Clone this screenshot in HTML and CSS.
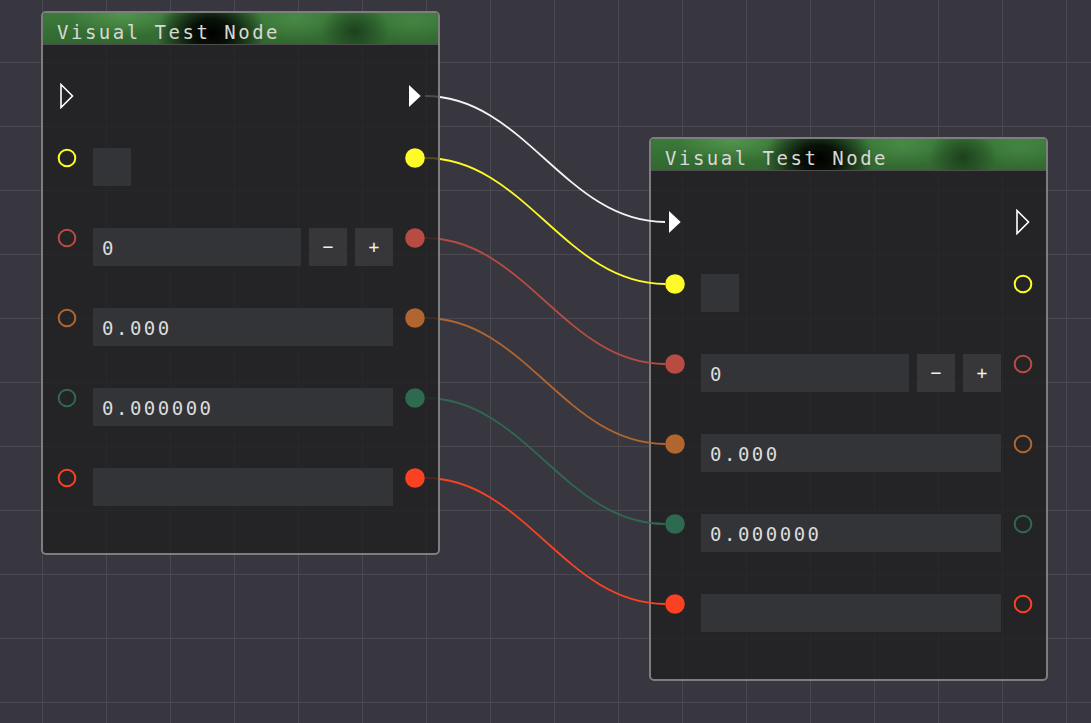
FILE: index.html
```html
<!DOCTYPE html>
<html>
<head>
<meta charset="utf-8">
<link rel="stylesheet" href="styles.css">
</head>
<body>
<div class="canvas">
  <div class="node node-b">
    <div class="node-header">Visual Test Node</div>
    <div class="node-body">
      <div class="row flow-row">
        <span class="pin flow"><svg viewBox="0 0 20 26" width="20" height="26"><polygon points="4,2 15.7,13 4,24" fill="#fff"/></svg></span>
        <span class="pin flow"><svg viewBox="0 0 20 26" width="20" height="26"><polygon points="4,1.5 15.5,13 4,24.5" fill="none" stroke="#fff" stroke-width="1.6"/></svg></span>
      </div>
      <div class="row pin-row">
        <span class="pin"><svg viewBox="0 0 20 20" width="20" height="20"><circle cx="10" cy="10" r="9.8" fill="#fffa28"/></svg></span>
        <div class="fields"><div class="box"></div></div>
        <span class="pin"><svg viewBox="0 0 20 20" width="20" height="20"><circle cx="10" cy="10" r="8.3" fill="none" stroke="#fffa28" stroke-width="2"/></svg></span>
      </div>
      <div class="row pin-row">
        <span class="pin"><svg viewBox="0 0 20 20" width="20" height="20"><circle cx="10" cy="10" r="9.8" fill="#b84c42"/></svg></span>
        <div class="fields"><div class="field">0</div><div class="btn">−</div><div class="btn">+</div></div>
        <span class="pin"><svg viewBox="0 0 20 20" width="20" height="20"><circle cx="10" cy="10" r="8.3" fill="none" stroke="#b84c42" stroke-width="2"/></svg></span>
      </div>
      <div class="row pin-row">
        <span class="pin"><svg viewBox="0 0 20 20" width="20" height="20"><circle cx="10" cy="10" r="9.8" fill="#b1652f"/></svg></span>
        <div class="fields"><div class="field">0.000</div></div>
        <span class="pin"><svg viewBox="0 0 20 20" width="20" height="20"><circle cx="10" cy="10" r="8.3" fill="none" stroke="#b1652f" stroke-width="2"/></svg></span>
      </div>
      <div class="row pin-row">
        <span class="pin"><svg viewBox="0 0 20 20" width="20" height="20"><circle cx="10" cy="10" r="9.8" fill="#2e6a4f"/></svg></span>
        <div class="fields"><div class="field">0.000000</div></div>
        <span class="pin"><svg viewBox="0 0 20 20" width="20" height="20"><circle cx="10" cy="10" r="8.3" fill="none" stroke="#2e6a4f" stroke-width="2"/></svg></span>
      </div>
      <div class="row pin-row">
        <span class="pin"><svg viewBox="0 0 20 20" width="20" height="20"><circle cx="10" cy="10" r="9.8" fill="#fa4222"/></svg></span>
        <div class="fields"><div class="field"></div></div>
        <span class="pin"><svg viewBox="0 0 20 20" width="20" height="20"><circle cx="10" cy="10" r="8.3" fill="none" stroke="#fa4222" stroke-width="2"/></svg></span>
      </div>
    </div>
  </div>

  <svg class="links" width="1091" height="723" viewBox="0 0 1091 723">
    <g fill="none" stroke-width="1.8">
      <path d="M425,96 C525,96 565,222 665,222" stroke="#f4f4f4"/>
      <path d="M425,158 C525,158 565,284 665,284" stroke="#fffa28"/>
      <path d="M425,238 C525,238 565,364 665,364" stroke="#b84c42"/>
      <path d="M425,318 C525,318 565,444 665,444" stroke="#b1652f"/>
      <path d="M425,398 C525,398 565,524 665,524" stroke="#2e6a4f"/>
      <path d="M425,478 C525,478 565,604 665,604" stroke="#fa4222"/>
    </g>
  </svg>

  <div class="node node-a">
    <div class="node-header">Visual Test Node</div>
    <div class="node-body">
      <div class="row flow-row">
        <span class="pin flow"><svg viewBox="0 0 20 26" width="20" height="26"><polygon points="4,1.5 15.5,13 4,24.5" fill="none" stroke="#fff" stroke-width="1.6"/></svg></span>
        <span class="pin flow"><svg viewBox="0 0 20 26" width="20" height="26"><polygon points="4,2 15.7,13 4,24" fill="#fff"/></svg></span>
      </div>
      <div class="row pin-row">
        <span class="pin"><svg viewBox="0 0 20 20" width="20" height="20"><circle cx="10" cy="10" r="8.3" fill="none" stroke="#fffa28" stroke-width="2"/></svg></span>
        <div class="fields"><div class="box"></div></div>
        <span class="pin"><svg viewBox="0 0 20 20" width="20" height="20"><circle cx="10" cy="10" r="9.8" fill="#fffa28"/></svg></span>
      </div>
      <div class="row pin-row">
        <span class="pin"><svg viewBox="0 0 20 20" width="20" height="20"><circle cx="10" cy="10" r="8.3" fill="none" stroke="#b84c42" stroke-width="2"/></svg></span>
        <div class="fields"><div class="field">0</div><div class="btn">−</div><div class="btn">+</div></div>
        <span class="pin"><svg viewBox="0 0 20 20" width="20" height="20"><circle cx="10" cy="10" r="9.8" fill="#b84c42"/></svg></span>
      </div>
      <div class="row pin-row">
        <span class="pin"><svg viewBox="0 0 20 20" width="20" height="20"><circle cx="10" cy="10" r="8.3" fill="none" stroke="#b1652f" stroke-width="2"/></svg></span>
        <div class="fields"><div class="field">0.000</div></div>
        <span class="pin"><svg viewBox="0 0 20 20" width="20" height="20"><circle cx="10" cy="10" r="9.8" fill="#b1652f"/></svg></span>
      </div>
      <div class="row pin-row">
        <span class="pin"><svg viewBox="0 0 20 20" width="20" height="20"><circle cx="10" cy="10" r="8.3" fill="none" stroke="#2e6a4f" stroke-width="2"/></svg></span>
        <div class="fields"><div class="field">0.000000</div></div>
        <span class="pin"><svg viewBox="0 0 20 20" width="20" height="20"><circle cx="10" cy="10" r="9.8" fill="#2e6a4f"/></svg></span>
      </div>
      <div class="row pin-row">
        <span class="pin"><svg viewBox="0 0 20 20" width="20" height="20"><circle cx="10" cy="10" r="8.3" fill="none" stroke="#fa4222" stroke-width="2"/></svg></span>
        <div class="fields"><div class="field"></div></div>
        <span class="pin"><svg viewBox="0 0 20 20" width="20" height="20"><circle cx="10" cy="10" r="9.8" fill="#fa4222"/></svg></span>
      </div>
    </div>
  </div>
</div>
</body>
</html>
```

FILE: styles.css
```css
html, body {
  margin: 0;
  padding: 0;
  background: #38373f;
}

.canvas {
  position: relative;
  width: 1091px;
  height: 723px;
  overflow: hidden;
  background-color: #38373f;
  background-image:
    linear-gradient(to right, #4a4952 1px, transparent 1px),
    linear-gradient(to bottom, #4a4952 1px, transparent 1px);
  background-size: 64px 64px;
  background-position: 42px 62px;
  font-family: "DejaVu Sans Mono", "Liberation Mono", monospace;
}

.links {
  position: absolute;
  left: 0;
  top: 0;
  z-index: 2;
}

.node {
  position: absolute;
  width: 399px;
  box-sizing: border-box;
  border: 2px solid #7e7e7e;
  border-radius: 5px;
  background: rgba(31, 31, 32, 0.8);
  display: flex;
  flex-direction: column;
}

.node-a { left: 41px; top: 11px; z-index: 3; }
.node-b { left: 649px; top: 137px; z-index: 1; }

.node-header {
  height: 32px;
  box-sizing: border-box;
  padding: 8px 0 0 14px;
  border-bottom: 1px solid #4e4e4e;
  border-radius: 3px 3px 0 0;
  color: #d8d8d8;
  font-size: 19px;
  line-height: 22px;
  letter-spacing: 2.5px;
  white-space: nowrap;
  background:
    radial-gradient(ellipse 55px 40px at 168px 20px, rgba(0,0,0,1) 0%, rgba(0,0,0,0.85) 35%, rgba(0,0,0,0) 100%),
    radial-gradient(ellipse 34px 30px at 312px 18px, rgba(12,34,14,0.6), rgba(12,34,14,0) 100%),
    radial-gradient(ellipse 55px 22px at 80px 2px, rgba(110,180,100,0.45), rgba(110,180,100,0) 100%),
    radial-gradient(ellipse 45px 22px at 252px 6px, rgba(95,165,90,0.4), rgba(95,165,90,0) 100%),
    radial-gradient(ellipse 40px 22px at 370px 8px, rgba(90,160,85,0.35), rgba(90,160,85,0) 100%),
    linear-gradient(#3b7a3a, #31682f);
}

.node-body {
  display: flex;
  flex-direction: column;
  padding: 38px 13px 47px 14px;
}

.row {
  display: flex;
  align-items: flex-start;
}

.flow-row {
  height: 26px;
  justify-content: space-between;
  margin-bottom: 39px;
}

.pin-row {
  height: 38px;
}

.pin-row + .pin-row {
  margin-top: 42px;
}

.pin {
  width: 20px;
  height: 20px;
  display: flex;
  align-items: center;
  justify-content: center;
  flex: none;
}

.pin.flow {
  height: 26px;
}

.pin svg { display: block; }

.fields {
  flex: 1;
  display: flex;
  gap: 8px;
  margin: 0 12px 0 16px;
  height: 38px;
}

.box {
  width: 38px;
  height: 38px;
  background: #333438;
}

.field {
  flex: 1;
  height: 38px;
  box-sizing: border-box;
  padding: 2px 0 0 9px;
  background: #333438;
  color: #dcdcdc;
  font-size: 19px;
  line-height: 36px;
  letter-spacing: 2.5px;
}

.btn {
  width: 38px;
  height: 38px;
  background: #37373a;
  color: #eeeeee;
  font-size: 18px;
  line-height: 38px;
  text-align: center;
}
```
